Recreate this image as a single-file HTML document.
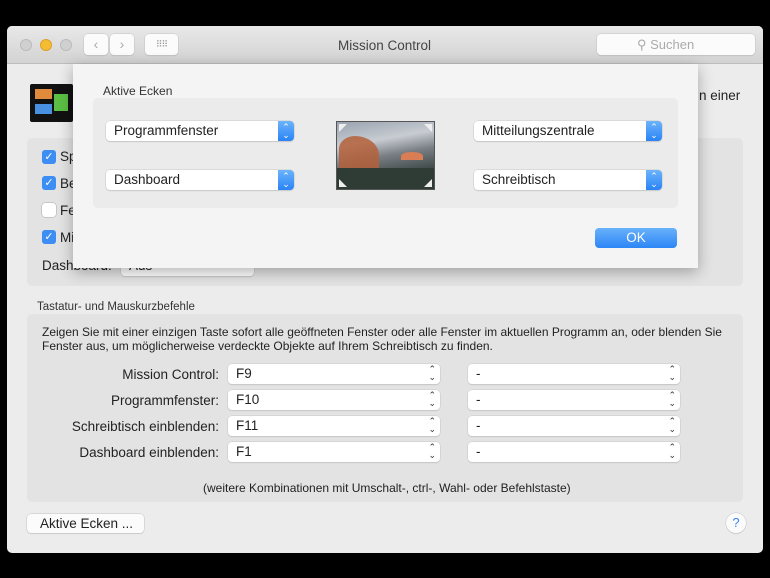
<!DOCTYPE html>
<html><head><meta charset="utf-8"><style>
*{box-sizing:border-box;margin:0;padding:0}
body{width:770px;height:578px;background:#000;font-family:"Liberation Sans",sans-serif;position:relative;overflow:hidden;color:#222}
.a{position:absolute}
.win{left:7px;top:26px;width:756px;height:527px;background:#ececec;border-radius:5px;overflow:hidden}
.tb{left:0;top:0;width:756px;height:38px;background:linear-gradient(#e8e8e8,#d3d3d3);border-bottom:1px solid #bdbdbd}
.dot{width:12px;height:12px;border-radius:50%;top:13px}
.btn{background:#fbfbfb;border-radius:4px;box-shadow:0 0 0 .5px #c4c4c4,0 1px 1px rgba(0,0,0,.12)}
.box{background:#e3e3e3;border-radius:5px}
.sel{background:#fff;border-radius:4px;box-shadow:0 0 0 .5px #c8c8c8,0 1px 1px rgba(0,0,0,.15);font-size:13.5px;padding-left:8px;line-height:20px;height:20px}
.arr{position:absolute;right:0;top:0;width:16px;height:20px;background:linear-gradient(#6cb3fa,#2a83f6);border-radius:0 4px 4px 0;color:#fff;font-size:9px;line-height:8px;text-align:center;padding-top:2px}
.ar2{position:absolute;right:4px;top:1px;color:#333;font-size:9px;line-height:8px;text-align:center}
.cb{width:14px;height:14px;border-radius:3px;background:#3c8ef5;color:#fff;font-size:11px;line-height:14px;text-align:center}
.t{font-size:13.5px;white-space:nowrap}
</style></head><body>
<div class="a win">
 <div class="a tb">
  <div class="a dot" style="left:13px;background:#d0d0d0;border:1px solid #bbb"></div>
  <div class="a dot" style="left:33px;background:#f4bd33;border:1px solid #dca029"></div>
  <div class="a dot" style="left:53px;background:#d0d0d0;border:1px solid #bbb"></div>
  <div class="a btn" style="left:77px;top:8px;width:24px;height:21px;color:#aaa;text-align:center;line-height:20px;font-size:14px">&lsaquo;</div>
  <div class="a btn" style="left:103px;top:8px;width:24px;height:21px;color:#aaa;text-align:center;line-height:20px;font-size:14px">&rsaquo;</div>
  <div class="a btn" style="left:138px;top:8px;width:33px;height:21px;color:#999;text-align:center;line-height:20px;font-size:9px;letter-spacing:-1px">⠿⠿</div>
  <div class="a t" style="left:331px;top:12px;color:#444;font-size:13.5px">Mission Control</div>
  <div class="a btn" style="left:590px;top:8px;width:158px;height:21px;color:#aaa;font-size:13px;line-height:21px;padding-left:40px">⚲ Suchen</div>
 </div>
 <div class="a" style="left:23px;top:58px;width:43px;height:38px;background:#111;border-radius:2px">
  <div class="a" style="left:5px;top:5px;width:17px;height:10px;background:#e08a3c"></div>
  <div class="a" style="left:24px;top:10px;width:14px;height:17px;background:#5bc045"></div>
  <div class="a" style="left:5px;top:20px;width:17px;height:10px;background:#4a90e0"></div>
 </div>
 <div class="a t" style="left:692px;top:62px">n einer</div>
 <div class="a box" style="left:20px;top:112px;width:716px;height:148px"></div>
 <div class="a cb" style="left:35px;top:124px">✓</div><div class="a t" style="left:53px;top:123px">Sp</div>
 <div class="a cb" style="left:35px;top:150px">✓</div><div class="a t" style="left:53px;top:150px">Be</div>
 <div class="a cb" style="left:35px;top:177px;background:#fff;box-shadow:0 0 0 .5px #aaa"></div><div class="a t" style="left:53px;top:177px">Fe</div>
 <div class="a cb" style="left:35px;top:204px">✓</div><div class="a t" style="left:53px;top:204px">Mi</div>
 <div class="a t" style="left:35px;top:232px">Dashboard:</div>
 <div class="a sel" style="left:114px;top:230px;width:133px">Aus</div>
 <div class="a" style="left:30px;top:275px;font-size:11.5px;color:#333">Tastatur- und Mauskurzbefehle</div>
 <div class="a box" style="left:20px;top:288px;width:716px;height:188px"></div>
 <div class="a" style="left:35px;top:299px;font-size:12px;line-height:14px;width:700px">Zeigen Sie mit einer einzigen Taste sofort alle geöffneten Fenster oder alle Fenster im aktuellen Programm an, oder blenden Sie Fenster aus, um möglicherweise verdeckte Objekte auf Ihrem Schreibtisch zu finden.</div>
 <div class="a t" style="right:544px;top:341px">Mission Control:</div>
 <div class="a t" style="right:544px;top:367px">Programmfenster:</div>
 <div class="a t" style="right:544px;top:393px">Schreibtisch einblenden:</div>
 <div class="a t" style="right:544px;top:419px">Dashboard einblenden:</div>
 <div class="a sel" style="left:221px;top:338px;width:212px">F9<div class="ar2">⌃<br>⌄</div></div>
 <div class="a sel" style="left:221px;top:364px;width:212px">F10<div class="ar2">⌃<br>⌄</div></div>
 <div class="a sel" style="left:221px;top:390px;width:212px">F11<div class="ar2">⌃<br>⌄</div></div>
 <div class="a sel" style="left:221px;top:416px;width:212px">F1<div class="ar2">⌃<br>⌄</div></div>
 <div class="a sel" style="left:461px;top:338px;width:212px">-<div class="ar2">⌃<br>⌄</div></div>
 <div class="a sel" style="left:461px;top:364px;width:212px">-<div class="ar2">⌃<br>⌄</div></div>
 <div class="a sel" style="left:461px;top:390px;width:212px">-<div class="ar2">⌃<br>⌄</div></div>
 <div class="a sel" style="left:461px;top:416px;width:212px">-<div class="ar2">⌃<br>⌄</div></div>
 <div class="a" style="left:196px;top:455px;font-size:12px">(weitere Kombinationen mit Umschalt-, ctrl-, Wahl- oder Befehlstaste)</div>
 <div class="a btn" style="left:20px;top:488px;width:117px;height:19px;font-size:13.5px;line-height:19px;padding-left:13px">Aktive Ecken ...</div>
 <div class="a btn" style="left:719px;top:487px;width:20px;height:20px;border-radius:50%;color:#3a85f0;text-align:center;font-size:13px;line-height:20px">?</div>
</div>
<div class="a" style="left:73px;top:64px;width:625px;height:204px;background:#f4f4f4;box-shadow:0 4px 14px rgba(0,0,0,.3)">
 <div class="a" style="left:30px;top:20px;font-size:12px;color:#333">Aktive Ecken</div>
 <div class="a box" style="left:20px;top:34px;width:585px;height:110px;background:#ebebeb"></div>
 <div class="a sel" style="left:33px;top:57px;width:188px">Programmfenster<div class="arr">⌃<br>⌄</div></div>
 <div class="a sel" style="left:33px;top:106px;width:188px">Dashboard<div class="arr">⌃<br>⌄</div></div>
 <div class="a sel" style="left:401px;top:57px;width:188px">Mitteilungszentrale<div class="arr">⌃<br>⌄</div></div>
 <div class="a sel" style="left:401px;top:106px;width:188px">Schreibtisch<div class="arr">⌃<br>⌄</div></div>
 <div class="a" style="left:263px;top:57px;width:99px;height:69px;border:1px solid #555;background:linear-gradient(170deg,#9aa3b0 0%,#c8ccd2 30%,#7a7f86 50%,#3f4a48 75%,#2b3a33 100%);overflow:hidden">
  <div class="a" style="left:2px;top:14px;width:40px;height:32px;background:#b4603a;border-radius:40% 60% 0 0;opacity:.85"></div>
  <div class="a" style="left:64px;top:30px;width:22px;height:8px;background:#d97d55;border-radius:50% 50% 0 0"></div>
  <div class="a" style="left:0;top:46px;width:99px;height:23px;background:#2f3c36"></div>
  <div class="a" style="left:2px;top:2px;width:0;height:0;border-top:8px solid #eee;border-right:8px solid transparent"></div>
  <div class="a" style="right:2px;top:2px;width:0;height:0;border-top:8px solid #eee;border-left:8px solid transparent"></div>
  <div class="a" style="left:2px;bottom:2px;width:0;height:0;border-bottom:8px solid #eee;border-right:8px solid transparent"></div>
  <div class="a" style="right:2px;bottom:2px;width:0;height:0;border-bottom:8px solid #eee;border-left:8px solid transparent"></div>
 </div>
 <div class="a" style="left:522px;top:164px;width:82px;height:20px;border-radius:4px;background:linear-gradient(#68b1fb,#2c86f6);color:#fff;text-align:center;font-size:13.5px;line-height:20px">OK</div>
</div>
</body></html>
